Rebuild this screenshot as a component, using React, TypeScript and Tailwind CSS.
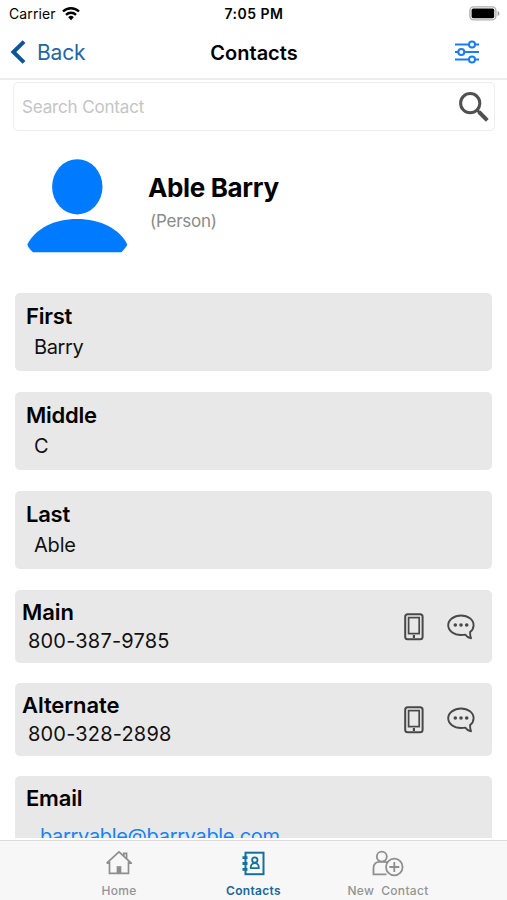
import React from 'react'

interface Field {
  label: string
  value: string
  spacing: string
}

const nameFields: Field[] = [
  { label: 'First', value: 'Barry', spacing: 'tracking-[-0.35px]' },
  { label: 'Middle', value: 'C', spacing: 'tracking-[-0.2px]' },
  { label: 'Last', value: 'Able', spacing: 'tracking-[-0.2px]' },
]

const phoneFields: Field[] = [
  { label: 'Main', value: '800-387-9785', spacing: 'tracking-[0.18px]' },
  { label: 'Alternate', value: '800-328-2898', spacing: 'tracking-[0.18px]' },
]

const StatusBar: React.FC = () => (
  <div className="flex h-[27px] shrink-0 items-center justify-between pr-[7px] pl-[9px] text-black">
    <div className="flex w-[119px] items-center gap-[6px]">
      <span className="text-[14px] leading-[20px] tracking-[0.1px]">Carrier</span>
      <svg width="18" height="14" viewBox="0 0 18 14" fill="none" stroke="#000" strokeWidth="2.4">
        <path d="M1 4.5a11.6 11.6 0 0 1 16 0" />
        <path d="M4 7.8a7.3 7.3 0 0 1 10 0" />
        <path d="M6.2 10.2a4 4 0 0 1 5.6 0L9 13.2z" fill="#000" stroke="none" />
      </svg>
    </div>
    <span className="text-[14px] leading-[20px] font-semibold tracking-[0.5px]">7:05 PM</span>
    <div className="flex w-[120px] justify-end">
      <svg width="31" height="15" viewBox="0 0 31 15">
        <rect x="0.9" y="0.9" width="26" height="13" rx="3.8" fill="#fff" stroke="#b0b0b0" strokeWidth="1.4" />
        <rect x="2.6" y="2.6" width="22.6" height="9.6" rx="1.6" fill="#000" />
        <path d="M28.6 5v5c1.2-.4 1.8-1.4 1.8-2.5s-.6-2.1-1.8-2.5z" fill="#999" />
      </svg>
    </div>
  </div>
)

const NavBar: React.FC = () => (
  <header className="flex h-[53px] shrink-0 items-center justify-between border-b-2 border-[#ececec] pr-[27px] pb-[1px] pl-[10px]">
    <button className="flex w-[120px] items-center gap-[11px] text-[#1f66a6]">
      <svg width="16" height="24" viewBox="0 0 16 24" fill="none" stroke="#0d559b" strokeWidth="4">
        <path d="M14 1.6 3.4 12 14 22.4" />
      </svg>
      <span className="pt-[1px] text-[21px] leading-[26px] tracking-[-0.15px]">Back</span>
    </button>
    <h1 className="pt-[1px] text-[20px] leading-[26px] font-semibold text-black">Contacts</h1>
    <div className="flex w-[102px] justify-end">
      <svg width="26" height="24" viewBox="0 0 26 24" fill="none" stroke="#1a7cf0" strokeWidth="2">
        <path d="M1 4.500h14M21 4.500h4M1 12h3.500M10.500 12H25M1 19.500h14M21 19.500h4" />
        <circle cx="18" cy="4.5" r="3" />
        <circle cx="7.3" cy="12" r="3" />
        <circle cx="18" cy="19.5" r="3" />
      </svg>
    </div>
  </header>
)

const SearchBox: React.FC = () => (
  <div className="mt-[2px] mr-[12px] ml-[13px] flex h-[49px] shrink-0 items-center justify-between rounded-[5px] border border-[#ededed] pr-[5px] pl-[8px]">
    <span className="text-[17px] leading-[22px] tracking-[-0.15px] text-[#c4c4c6]">Search Contact</span>
    <svg width="30" height="30" viewBox="0 0 30 30" fill="none" stroke="#505050">
      <circle cx="11.2" cy="11.2" r="9.6" strokeWidth="3" />
      <path d="M18 18 20.800 20.800" strokeWidth="2.8" />
      <path d="M20 20 28.300 28.300" strokeWidth="4" />
    </svg>
  </div>
)

const Profile: React.FC = () => (
  <section className="mt-[28px] flex h-[94px] shrink-0 pl-[27px]">
    <svg width="101" height="94" viewBox="0 0 101 94" fill="#007aff">
      <ellipse cx="50.3" cy="27.8" rx="25.2" ry="27.6" />
      <path d="M0.3 85.5C8.5 69.500 27 60 50 60s42.500 9.500 50.300 25.500c-1 2.500-3.300 5.200-6 7.800H6C3.500 91 1.300 88.500 .3 85.500z" />
    </svg>
    <div className="pt-[12px] pl-[20px]">
      <h2 className="text-[26px] leading-[34px] font-bold tracking-[-0.35px] text-black">Able Barry</h2>
      <p className="mt-[5px] pl-[2px] text-[17px] leading-[22px] tracking-[-0.25px] text-[#8a8a8a]">(Person)</p>
    </div>
  </section>
)

const PhoneIcon: React.FC = () => (
  <svg width="20" height="28" viewBox="0 0 20 28" fill="none" stroke="#484848">
    <rect x="1.2" y="1.2" width="17.4" height="25" rx="2.5" strokeWidth="2" />
    <rect x="4.600" y="4.600" width="10.600" height="16" strokeWidth="1.700" />
    <path d="M9.900 22v3" strokeWidth="2.200" />
  </svg>
)

const ChatIcon: React.FC = () => (
  <svg width="28" height="26" viewBox="0 0 28 26" fill="none" stroke="#484848" strokeWidth="1.9">
    <path
      d="M18.200 20.600c-1.300.3-2.700.4-4.200.4C6.900 21 1.200 16.700 1.200 11.300S6.900 1.500 14 1.500s12.600 4.300 12.600 9.800c0 2.700-1.300 5.100-3.500 6.800-.2 2.200.2 4.100.9 6.300-2.700-.6-4.500-1.700-5.800-3.800z"
      strokeLinejoin="round"
    />
    <g fill="#484848" stroke="none">
      <circle cx="8.3" cy="11" r="1.8" />
      <circle cx="14" cy="11" r="1.8" />
      <circle cx="19.7" cy="11" r="1.8" />
    </g>
  </svg>
)

const TabBar: React.FC = () => (
  <nav className="flex h-[60px] shrink-0 justify-center border-t border-[#dcdcdc] bg-[#f7f7f7] text-[12px] leading-[16px] font-medium tracking-[0.3px] text-[#949494]">
    <div className="flex w-[134px] flex-col items-center pt-[9px]">
      <svg width="28" height="25" viewBox="0 0 28 25" fill="none" stroke="#8e8e8e" strokeWidth="1.7">
        <path d="M4.500 11.500v11.800h19V11.500" />
        <path d="M1.700 13.200 14 1.800l12.300 11.400H23.500M1.700 13.200h2.800" strokeLinejoin="round" />
        <path d="M18.800 6V3.300h2.800v5.300" />
        <rect x="12.5" y="17" width="3" height="6" fill="#8e8e8e" />
      </svg>
      <span className="mt-[8px]">Home</span>
    </div>
    <div className="flex w-[135px] flex-col items-center pt-[9px] text-[#16679c]">
      <svg width="24" height="26" viewBox="0 0 24 26" fill="none" stroke="#16709f" strokeWidth="2">
        <rect x="3.5" y="2.7" width="18" height="21.5" />
        <path d="M.5 7.700h5M.5 13.500h5M.5 19.300h5" strokeWidth="2.8" />
        <circle cx="12.8" cy="10" r="2.7" strokeWidth="1.8" />
        <path d="M8.800 18.200c-.2-3.200 1.300-5 4-5s4.200 1.800 4 5z" strokeWidth="1.8" />
      </svg>
      <span className="mt-[7px] font-semibold">Contacts</span>
    </div>
    <div className="flex w-[134px] flex-col items-center pt-[9px]">
      <svg width="32" height="27" viewBox="0 0 32 27" fill="none" stroke="#8e8e8e" strokeWidth="1.8">
        <circle cx="9.8" cy="6.6" r="5" />
        <path d="M14.500 24.300H1.500v-6.500c0-3.700 2.500-6 6-6h4.500c1.500 0 2.800.3 3.900 1" />
        <circle cx="22.3" cy="17" r="8.3" />
        <path d="M17.300 17h10M22.300 12v10" />
      </svg>
      <span className="mt-[6px] whitespace-pre">New  Contact</span>
    </div>
  </nav>
)

const App: React.FC = () => {
  return (
    <div className="flex h-[900px] w-[507px] flex-col overflow-hidden bg-white font-['Inter','Liberation_Sans',sans-serif]">
      <StatusBar />
      <NavBar />

      {/* Scrolling content, cut off by the tab bar */}
      <main className="mb-[2px] flex min-h-0 flex-1 flex-col overflow-hidden">
        <SearchBox />
        <Profile />

        <div className="mt-[40px] flex shrink-0 flex-col gap-[21px] pr-[15px] pl-[15px]">
          {nameFields.map((field) => (
            <div key={field.label} className="h-[78px] rounded-[5px] bg-[#e8e8e8] pt-[9px] pl-[11px]">
              <h3 className="text-[22px] leading-[28px] font-semibold tracking-[-0.25px] text-black">{field.label}</h3>
              <p className={`mt-[4px] pl-[8px] text-[20px] leading-[26px] text-[#111] ${field.spacing}`}>
                {field.value}
              </p>
            </div>
          ))}
        </div>

        <div className="mt-[21px] flex shrink-0 flex-col gap-[20px] pr-[15px] pl-[15px]">
          {phoneFields.map((field) => (
            <div
              key={field.label}
              className="flex h-[73px] justify-between rounded-[5px] bg-[#e8e8e8] pt-[8px] pr-[17px] pl-[7px]"
            >
              <div>
                <h3 className="text-[22px] leading-[28px] font-semibold tracking-[-0.1px] text-black">{field.label}</h3>
                <p className={`mt-[2px] pl-[6px] text-[20px] leading-[26px] text-[#111] ${field.spacing}`}>
                  {field.value}
                </p>
              </div>
              <div className="flex items-center gap-[23px] pb-[8px]">
                <PhoneIcon />
                <ChatIcon />
              </div>
            </div>
          ))}
          <div className="h-[85px] rounded-[5px] bg-[#e8e8e8] pt-[8px] pl-[11px]">
            <h3 className="text-[22px] leading-[28px] font-semibold tracking-[-0.2px] text-black">Email</h3>
            <p className="mt-[11px] pl-[14px] text-[20px] leading-[26px] tracking-[-0.32px] text-[#1a80f5]">
              barryable@barryable.com
            </p>
          </div>
        </div>
      </main>

      <TabBar />
    </div>
  )
}

export default App
